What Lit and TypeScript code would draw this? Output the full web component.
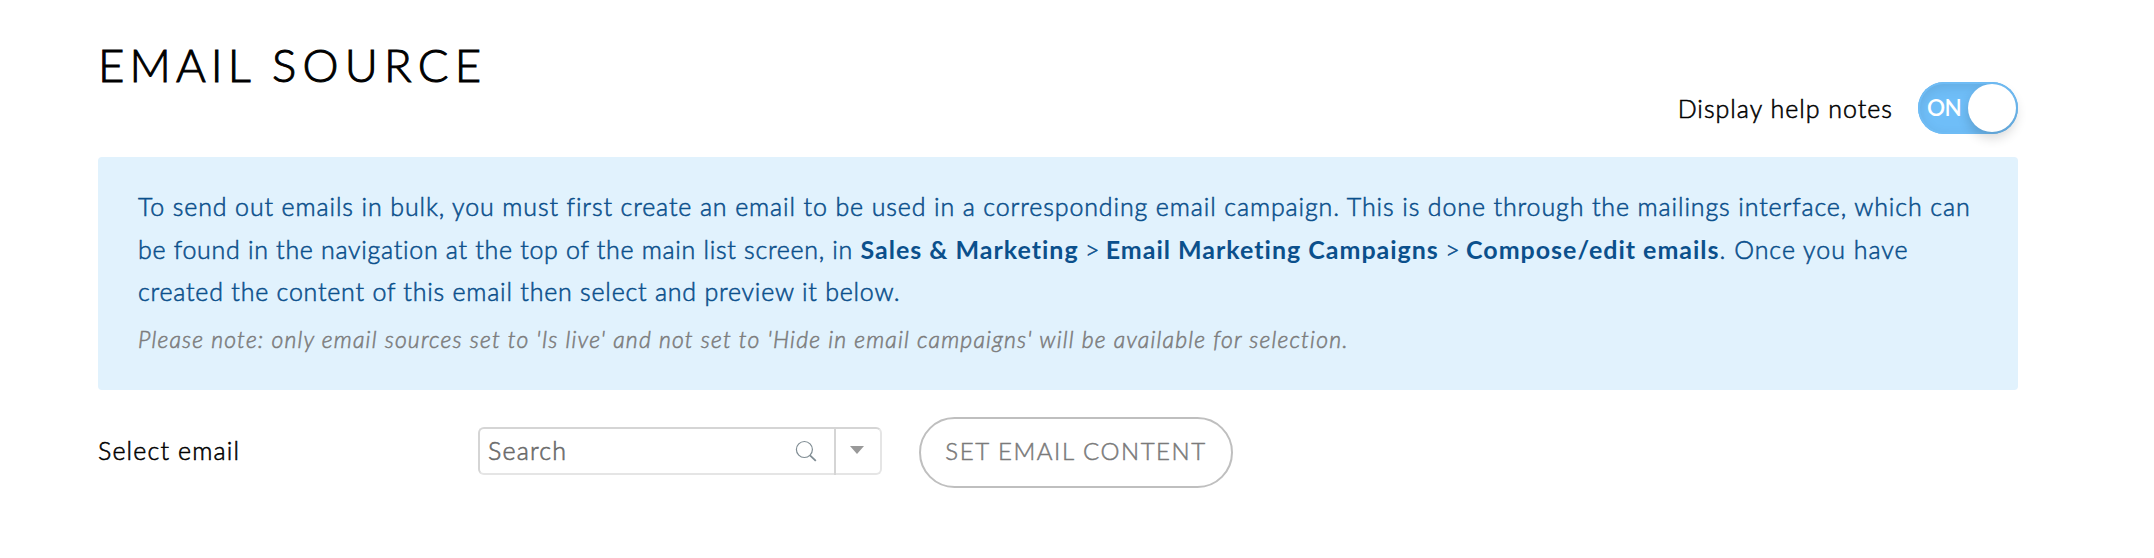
import { LitElement, html, css } from "lit";
import { customElement, property } from "lit/decorators.js";

@customElement("help-toggle")
class HelpToggle extends LitElement {
  static styles = css`
    :host { display: block; -webkit-text-stroke: 0; }
    .track {
      box-sizing: border-box;
      display: flex;
      align-items: center;
      justify-content: space-between;
      width: 100px;
      height: 52px;
      padding: 2px 2px 2px 9px;
      border-radius: 26px;
      background: #6fbef8;
      box-shadow: inset 0 0 0 2px #6fbcf5, inset 0 4px 14px rgba(0, 0, 0, 0.11);
    }
    .state {
      color: #fff;
      font: 600 22.5px/48px Lato, sans-serif;
      letter-spacing: -0.6px;
    }
    .knob {
      width: 48px;
      height: 48px;
      border-radius: 50%;
      background: #fff;
      box-shadow: 0 6px 12px rgba(0, 0, 0, 0.16);
    }
  `;
  render() {
    return html`<div class="track" role="switch" aria-checked="true">
      <span class="state">ON</span><span class="knob"></span>
    </div>`;
  }
}

@customElement("email-picker")
class EmailPicker extends LitElement {
  @property() placeholder = "Search";
  static styles = css`
    :host { display: block; }
    .box {
      box-sizing: border-box;
      display: flex;
      width: 404px;
      height: 48px;
      border: 2px solid;
      border-color: #d5d5d5 #e5e5e5 #e5e5e5 #d5d5d5;
      border-radius: 6px;
      background: #fff;
    }
    .field {
      flex: 1;
      min-width: 0;
      height: 42px;
      padding: 0 0 0 8px;
      border: 0;
      outline: 0;
      background: none;
      font: 300 25px/42px Lato, sans-serif;
      letter-spacing: 1.2px;
      -webkit-text-stroke: 0.6px #6b6b6b;
    }
    .field::placeholder { color: #6b6b6b; opacity: 1; }
    .glass { margin: 11px 17px 0 0; width: 22px; height: 22px; }
    .drop {
      display: flex;
      justify-content: center;
      width: 44px;
      height: 46px;
      border-left: 2px solid #d5d5d5;
    }
    .caret { width: 14px; height: 8px; margin: 17px 2px 0 0; }
  `;
  render() {
    return html`<div class="box">
      <input class="field" placeholder=${this.placeholder} />
      <svg class="glass" viewBox="0 0 22 22" fill="none" stroke="#7f8c93">
        <circle cx="9.4" cy="9.5" r="8" stroke-width="1.2" />
        <path d="M15 15.3L20.8 20.8" stroke-width="1.8" />
      </svg>
      <div class="drop">
        <svg class="caret" viewBox="0 0 14 8"><path d="M0 0H14L7 8Z" fill="#999" /></svg>
      </div>
    </div>`;
  }
}

@customElement("app-root")
class AppRoot extends LitElement {
  static styles = css`
    :host {
      display: block;
      box-sizing: border-box;
      height: 558px;
      padding: 0 136px 0 98px;
      background: #fff;
      color: #000;
      font: 300 25px/30px Lato, sans-serif;
      -webkit-text-stroke: 0.55px;
    }
    .head {
      display: flex;
      justify-content: space-between;
      height: 157px;
    }
    .title {
      margin: 38px 0 0;
      font-size: 45.5px;
      font-weight: 300;
      line-height: 54px;
      letter-spacing: 6.2px;
      -webkit-text-stroke: 1px;
    }
    .lead { letter-spacing: 5.1px; }
    .switch {
      display: flex;
      align-items: center;
      gap: 25px;
      height: 52px;
      margin-top: 82px;
    }
    .switch-label { letter-spacing: 1px; }
    .note {
      box-sizing: border-box;
      height: 233px;
      padding: 28px 40px 0;
      border-radius: 4px;
      background: #e1f2fd;
      color: #0b508c;
      white-space: nowrap;
    }
    .line { height: 42.5px; line-height: 42.5px; }
    .l1 { letter-spacing: 0.875px; }
    .l2 { letter-spacing: 0.7px; }
    .l2 b { font-weight: 700; letter-spacing: 0.99px; -webkit-text-stroke: 0; }
    .sep { letter-spacing: -0.3px; }
    .tail { letter-spacing: 0.98px; }
    .l3 { letter-spacing: 0.78px; }
    .hint {
      margin-top: 6px;
      color: #7d7d7d;
      font-size: 23px;
      font-style: italic;
      line-height: 40px;
      letter-spacing: 1.19px;
    }
    .row { display: flex; align-items: flex-start; padding-top: 27px; }
    .row-label { width: 380px; margin-top: 18px; letter-spacing: 1.15px; }
    .picker { margin-top: 10px; }
    .button {
      box-sizing: border-box;
      width: 314px;
      height: 71px;
      margin-left: 37px;
      padding: 0 0 4px;
      border: 2px solid #bfbfbf;
      border-radius: 36px;
      background: #fff;
      color: #7a7a7a;
      font: inherit;
      font-size: 24px;
      letter-spacing: 1.55px;
      -webkit-text-stroke: 0.5px;
    }
  `;
  render() {
    return html`
      <div class="head">
        <h1 class="title"><span class="lead">EMAIL </span>SOURCE</h1>
        <div class="switch">
          <span class="switch-label">Display help notes</span>
          <help-toggle></help-toggle>
        </div>
      </div>
      <div class="note">
        <div class="line l1">To send out emails in bulk, you must first create an email to be used in a corresponding email campaign. This is done through the mailings interface, which can</div>
        <div class="line l2">be found in the navigation at the top of the main list screen, in <b>Sales &amp; Marketing</b><span class="sep"> &gt; </span><b>Email Marketing Campaigns</b><span class="sep"> &gt; </span><b>Compose/edit emails</b><span class="tail">. Once you have</span></div>
        <div class="line l3">created the content of this email then select and preview it below.</div>
        <div class="hint">Please note: only email sources set to 'Is live' and not set to 'Hide in email campaigns' will be available for selection.</div>
      </div>
      <div class="row">
        <span class="row-label">Select email</span>
        <email-picker class="picker"></email-picker>
        <button class="button">SET EMAIL CONTENT</button>
      </div>
    `;
  }
}
